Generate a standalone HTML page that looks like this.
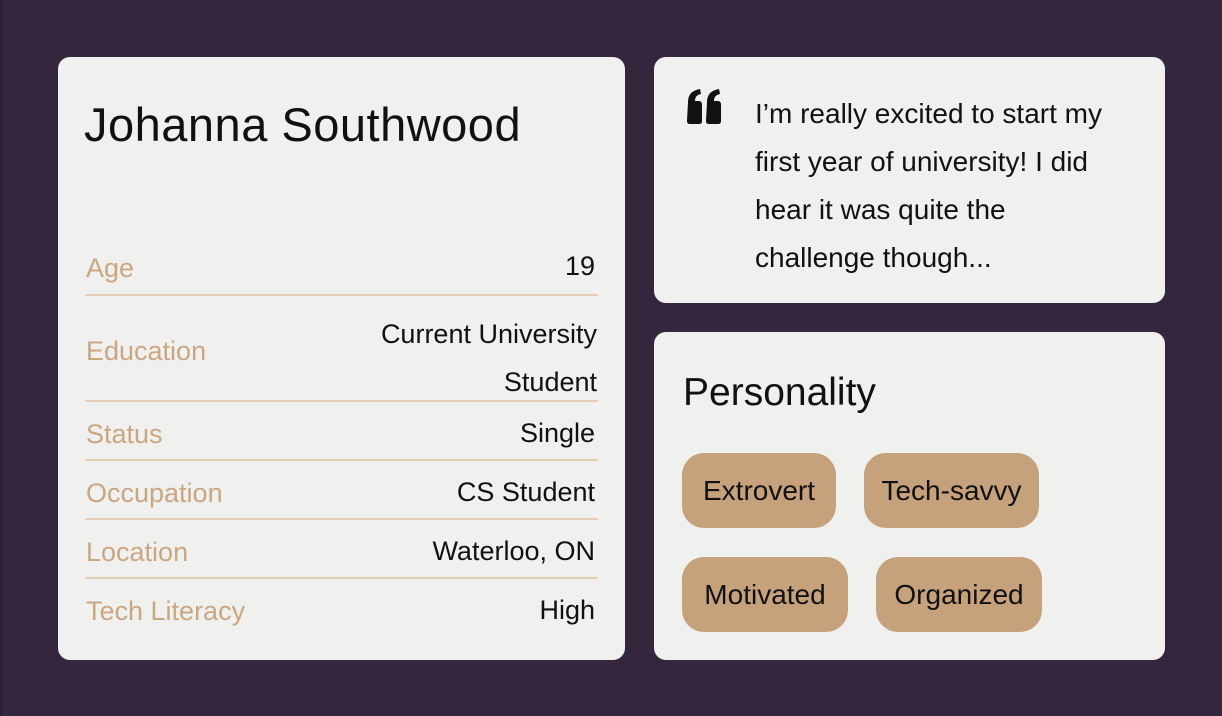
<!DOCTYPE html>
<html><head><meta charset="utf-8"><style>
*{margin:0;padding:0;box-sizing:border-box}
body{width:1222px;height:716px;background:#34273d;font-family:"Liberation Sans",sans-serif;position:relative;overflow:hidden}
.edge{position:absolute;left:0;top:0;width:2px;height:716px;background:#2a1f31}
.card{position:absolute;background:#f0f0ee;border-radius:12px}
.t{position:absolute;white-space:nowrap;font-size:27px;color:#111}
.l{color:#c9a783}
.line{position:absolute;left:85px;width:513px;height:2px;background:#e2cfb6}
.pill{position:absolute;background:#c6a27c;border-radius:22px;font-size:28px;color:#111;display:flex;align-items:center;justify-content:center}
</style></head><body>
<div class="edge"></div>
<div class="card" style="left:58px;top:57px;width:567px;height:603px"></div>
<div class="card" style="left:654px;top:57px;width:511px;height:246px"></div>
<div class="card" style="left:654px;top:332px;width:511px;height:328px"></div>

<div class="t" style="left:84px;top:97px;font-size:47px;letter-spacing:0.5px">Johanna Southwood</div>

<div class="t l" style="left:86px;top:253px">Age</div>
<div class="t" style="right:627px;top:251px">19</div>
<div class="line" style="top:294px"></div>
<div class="t l" style="left:86px;top:336px">Education</div>
<div class="t" style="right:625px;top:310px;text-align:right;line-height:48px">Current University<br>Student</div>
<div class="line" style="top:400px"></div>
<div class="t l" style="left:86px;top:419px">Status</div>
<div class="t" style="right:627px;top:418px">Single</div>
<div class="line" style="top:459px"></div>
<div class="t l" style="left:86px;top:478px">Occupation</div>
<div class="t" style="right:627px;top:477px">CS Student</div>
<div class="line" style="top:518px"></div>
<div class="t l" style="left:86px;top:537px">Location</div>
<div class="t" style="right:627px;top:536px">Waterloo, ON</div>
<div class="line" style="top:577px"></div>
<div class="t l" style="left:86px;top:596px">Tech Literacy</div>
<div class="t" style="right:627px;top:595px">High</div>

<svg style="position:absolute;left:685px;top:88px" width="38" height="38" viewBox="0 0 38 38">
<path d="M3 14 Q3 3 15 1 L16 6 Q10 7 10 13 L14 13 Q17 13 17 17 L17 33 Q17 36 14 36 L5 36 Q2 36 2 33 Z" fill="#111"/>
<path d="M22 14 Q22 3 34 1 L35 6 Q29 7 29 13 L33 13 Q36 13 36 17 L36 33 Q36 36 33 36 L24 36 Q21 36 21 33 Z" fill="#111"/>
</svg>
<div class="t" style="left:755px;top:90px;line-height:48px;font-size:28px">I’m really excited to start my<br>first year of university! I did<br>hear it was quite the<br>challenge though...</div>

<div class="t" style="left:683px;top:371px;font-size:39px">Personality</div>
<div class="pill" style="left:682px;top:453px;width:154px;height:75px">Extrovert</div>
<div class="pill" style="left:864px;top:453px;width:175px;height:75px">Tech-savvy</div>
<div class="pill" style="left:682px;top:557px;width:166px;height:75px">Motivated</div>
<div class="pill" style="left:876px;top:557px;width:166px;height:75px">Organized</div>
</body></html>
